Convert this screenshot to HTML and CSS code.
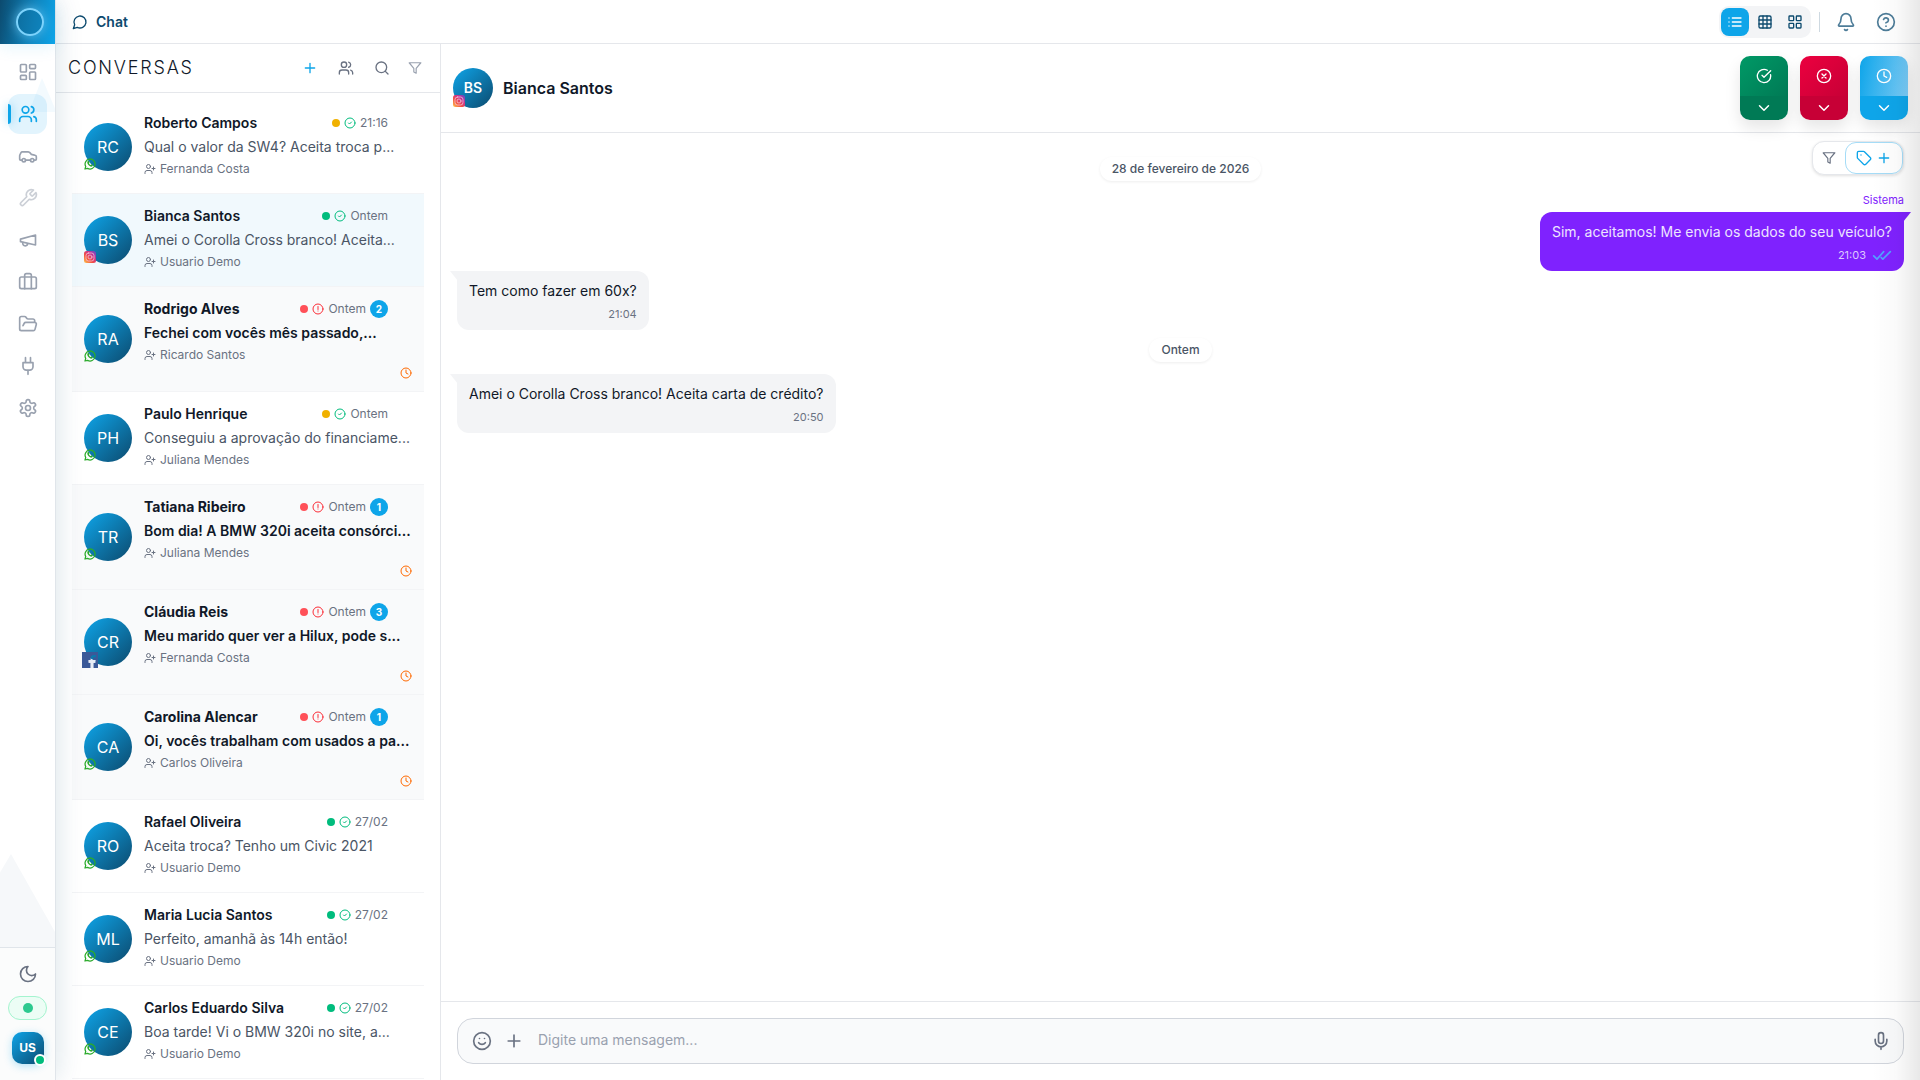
FILE: index.html
```html
<!DOCTYPE html>
<html lang="pt-BR">
<head>
<meta charset="UTF-8">
<meta name="viewport" content="width=device-width, initial-scale=1.0">
<title>Chat</title>
<link rel="stylesheet" href="styles.css">
</head>
<body>

<!-- Icon sprite -->
<svg class="sprite" aria-hidden="true">
    <defs>
        <linearGradient id="insta-fill" x1="0" y1="1" x2="1" y2="0">
            <stop offset="0" stop-color="#fdc94f"/>
            <stop offset="0.35" stop-color="#f5533f"/>
            <stop offset="0.65" stop-color="#c9338c"/>
            <stop offset="1" stop-color="#5a4fd0"/>
        </linearGradient>
    </defs>
    <symbol id="i-chat" viewBox="0 0 24 24"><path d="M7.9 20A9 9 0 1 0 4 16.1L2 22Z"/></symbol>
    <symbol id="i-dashboard" viewBox="0 0 24 24"><rect width="7" height="9" x="3" y="3" rx="1"/><rect width="7" height="5" x="14" y="3" rx="1"/><rect width="7" height="9" x="14" y="12" rx="1"/><rect width="7" height="5" x="3" y="16" rx="1"/></symbol>
    <symbol id="i-users" viewBox="0 0 24 24"><path d="M16 21v-2a4 4 0 0 0-4-4H6a4 4 0 0 0-4 4v2"/><circle cx="9" cy="7" r="4"/><path d="M22 21v-2a4 4 0 0 0-3-3.87"/><path d="M16 3.13a4 4 0 0 1 0 7.75"/></symbol>
    <symbol id="i-user-plus" viewBox="0 0 24 24"><path d="M16 21v-2a4 4 0 0 0-4-4H6a4 4 0 0 0-4 4v2"/><circle cx="9" cy="7" r="4"/><path d="M19 8v6M22 11h-6"/></symbol>
    <symbol id="i-car" viewBox="0 0 24 24"><path d="M19 17h2c.6 0 1-.4 1-1v-3c0-.9-.7-1.7-1.5-1.9C18.700 10.600 16 10 16 10s-1.300-1.400-2.200-2.300c-.5-.4-1.100-.7-1.800-.7H5c-.6 0-1.100.4-1.400.9l-1.400 2.900A3.700 3.700 0 0 0 2 12v4c0 .6.4 1 1 1h2"/><circle cx="7" cy="17" r="2"/><path d="M9 17h6"/><circle cx="17" cy="17" r="2"/></symbol>
    <symbol id="i-wrench" viewBox="0 0 24 24"><path d="M14.700 6.300a1 1 0 0 0 0 1.400l1.600 1.600a1 1 0 0 0 1.400 0l3.770-3.770a6 6 0 0 1-7.940 7.940l-6.910 6.910a2.120 2.120 0 0 1-3-3l6.910-6.910a6 6 0 0 1 7.940-7.940l-3.760 3.760z"/></symbol>
    <symbol id="i-megaphone" viewBox="0 0 24 24"><path d="m3 11 18-5v12L3 14v-3z"/><path d="M11.600 16.800a3 3 0 1 1-5.800-1.600"/></symbol>
    <symbol id="i-briefcase" viewBox="0 0 24 24"><path d="M16 20V4a2 2 0 0 0-2-2h-4a2 2 0 0 0-2 2v16"/><rect width="20" height="14" x="2" y="6" rx="2"/></symbol>
    <symbol id="i-folder" viewBox="0 0 24 24"><path d="m6 14 1.500-2.900A2 2 0 0 1 9.240 10H20a2 2 0 0 1 1.940 2.500l-1.540 6a2 2 0 0 1-1.950 1.500H4a2 2 0 0 1-2-2V5a2 2 0 0 1 2-2h3.900a2 2 0 0 1 1.690.9l.81 1.200a2 2 0 0 0 1.670.9H18a2 2 0 0 1 2 2v2"/></symbol>
    <symbol id="i-plug" viewBox="0 0 24 24"><path d="M12 22v-5M9 8V2M15 8V2M18 8v5a4 4 0 0 1-4 4h-4a4 4 0 0 1-4-4V8Z"/></symbol>
    <symbol id="i-settings" viewBox="0 0 24 24"><path d="M12.220 2h-.44a2 2 0 0 0-2 2v.18a2 2 0 0 1-1 1.730l-.43.25a2 2 0 0 1-2 0l-.15-.08a2 2 0 0 0-2.730.73l-.22.38a2 2 0 0 0 .73 2.730l.15.1a2 2 0 0 1 1 1.720v.51a2 2 0 0 1-1 1.740l-.15.09a2 2 0 0 0-.73 2.730l.22.38a2 2 0 0 0 2.730.73l.15-.08a2 2 0 0 1 2 0l.43.25a2 2 0 0 1 1 1.730V20a2 2 0 0 0 2 2h.44a2 2 0 0 0 2-2v-.18a2 2 0 0 1 1-1.730l.43-.25a2 2 0 0 1 2 0l.15.08a2 2 0 0 0 2.730-.73l.22-.39a2 2 0 0 0-.73-2.730l-.15-.08a2 2 0 0 1-1-1.740v-.5a2 2 0 0 1 1-1.740l.15-.09a2 2 0 0 0 .73-2.730l-.22-.38a2 2 0 0 0-2.730-.73l-.15.08a2 2 0 0 1-2 0l-.43-.25a2 2 0 0 1-1-1.730V4a2 2 0 0 0-2-2z"/><circle cx="12" cy="12" r="3"/></symbol>
    <symbol id="i-moon" viewBox="0 0 24 24"><path d="M12 3a6 6 0 0 0 9 9 9 9 0 1 1-9-9Z"/></symbol>
    <symbol id="i-plus" viewBox="0 0 24 24"><path d="M5 12h14M12 5v14"/></symbol>
    <symbol id="i-search" viewBox="0 0 24 24"><circle cx="11" cy="11" r="8"/><path d="m21 21-4.300-4.300"/></symbol>
    <symbol id="i-filter" viewBox="0 0 24 24"><path d="M22 3H2l8 9.460V19l4 2v-8.540L22 3z"/></symbol>
    <symbol id="i-list" viewBox="0 0 24 24"><path d="M8 6h13M8 12h13M8 18h13M3 6h.01M3 12h.01M3 18h.01"/></symbol>
    <symbol id="i-grid" viewBox="0 0 24 24"><rect width="18" height="18" x="3" y="3" rx="2"/><path d="M3 9h18M3 15h18M9 3v18M15 3v18"/></symbol>
    <symbol id="i-cards" viewBox="0 0 24 24"><rect width="7" height="7" x="3" y="3" rx="1"/><rect width="7" height="7" x="14" y="3" rx="1"/><rect width="7" height="7" x="14" y="14" rx="1"/><rect width="7" height="7" x="3" y="14" rx="1"/></symbol>
    <symbol id="i-bell" viewBox="0 0 24 24"><path d="M10.270 21a2 2 0 0 0 3.460 0"/><path d="M3.260 15.330A1 1 0 0 0 4 17h16a1 1 0 0 0 .74-1.670C19.410 13.960 18 12.500 18 8A6 6 0 0 0 6 8c0 4.500-1.410 5.960-2.740 7.330"/></symbol>
    <symbol id="i-help" viewBox="0 0 24 24"><circle cx="12" cy="12" r="10"/><path d="M9.090 9a3 3 0 0 1 5.830 1c0 2-3 3-3 3M12 17h.01"/></symbol>
    <symbol id="i-check-circle" viewBox="0 0 24 24"><circle cx="12" cy="12" r="10"/><path d="m9 12 2 2 4-4"/></symbol>
    <symbol id="i-check-big" viewBox="0 0 24 24"><path d="M21.800 10A10 10 0 1 1 17 3.340"/><path d="m9 11 3 3L22 4"/></symbol>
    <symbol id="i-alert" viewBox="0 0 24 24"><circle cx="12" cy="12" r="10"/><path d="M12 7v6M12 16h.01"/></symbol>
    <symbol id="i-x-circle" viewBox="0 0 24 24"><circle cx="12" cy="12" r="10"/><path d="m15 9-6 6M9 9l6 6"/></symbol>
    <symbol id="i-clock" viewBox="0 0 24 24"><circle cx="12" cy="12" r="10"/><path d="M12 6v6l4 2"/></symbol>
    <symbol id="i-chevron" viewBox="0 0 24 24"><path d="m6 9 6 6 6-6"/></symbol>
    <symbol id="i-tag" viewBox="0 0 24 24"><path d="M12.590 2.590A2 2 0 0 0 11.170 2H4a2 2 0 0 0-2 2v7.170a2 2 0 0 0 .59 1.420l8.700 8.700a2.430 2.430 0 0 0 3.420 0l6.580-6.580a2.430 2.430 0 0 0 0-3.420z"/><path d="M7.500 7.500h.01"/></symbol>
    <symbol id="i-read" viewBox="0 0 24 16"><path d="m2 9 4 4 8-9M11 11l2 2 9-9"/></symbol>
    <symbol id="i-smile" viewBox="0 0 24 24"><circle cx="12" cy="12" r="10"/><path d="M8 14s1.500 2 4 2 4-2 4-2M9 9h.01M15 9h.01"/></symbol>
    <symbol id="i-mic" viewBox="0 0 24 24"><rect x="9" y="2" width="6" height="13" rx="3"/><path d="M19 10v2a7 7 0 0 1-14 0v-2M12 19v3"/></symbol>
    <symbol id="i-whatsapp" viewBox="0 0 24 24"><path fill="none" stroke="#2cab2c" stroke-width="2.500" d="m2 22 1.500-5A10 10 0 1 1 7.200 20.700Z"/><path fill="#2cab2c" stroke="none" d="M8 6c-2 1-2 4 0 7s6 5 8 4c2-1 2-3 1-3.500l-2-1-1.500 1.500c-2-.7-3-2-3.500-3.500L11 9 10 6.500C9.700 6 9 5.700 8 6Z"/></symbol>
    <symbol id="i-instagram" viewBox="0 0 24 24"><rect width="24" height="24" rx="5" fill="url(#insta-fill)" stroke="none"/><rect x="4" y="4" width="16" height="16" rx="5" stroke="#f6c5dc" stroke-width="1.500" fill="none"/><circle cx="12" cy="12" r="4" stroke="#f6c5dc" stroke-width="1.500" fill="none"/></symbol>
    <symbol id="i-facebook" viewBox="0 0 24 24"><path fill="#3b5998" stroke="none" d="M0 0h24v24h-7v-8h3l.5-4H17v-2c0-1.200.5-2 2-2h2V4.500h-3c-3.500 0-5 2-5 5V12h-3v4h3v8H0Z"/><path fill="#e8edf6" stroke="none" d="M13 24v-8h-3v-4h3l1-2 3 2h3.500L20 16h-3v8Z"/></symbol>
</svg>

<div class="app">
    <aside class="sidebar">
        <div class="logo">
            <span class="logo-ring"></span>
        </div>
        <nav class="nav">
            <a class="nav-link" href="#" aria-label="Painel"><svg class="icon icon-20"><use href="#i-dashboard"/></svg></a>
            <a class="nav-link active" href="#" aria-label="Contatos"><svg class="icon icon-20"><use href="#i-users"/></svg></a>
            <a class="nav-link" href="#" aria-label="Carros"><svg class="icon icon-20"><use href="#i-car"/></svg></a>
            <a class="nav-link disabled" href="#" aria-label="Oficina"><svg class="icon icon-20"><use href="#i-wrench"/></svg></a>
            <a class="nav-link" href="#" aria-label="Campanhas"><svg class="icon icon-20"><use href="#i-megaphone"/></svg></a>
            <a class="nav-link" href="#" aria-label="Neg&oacute;cios"><svg class="icon icon-20"><use href="#i-briefcase"/></svg></a>
            <a class="nav-link" href="#" aria-label="Arquivos"><svg class="icon icon-20"><use href="#i-folder"/></svg></a>
            <a class="nav-link" href="#" aria-label="Integra&ccedil;&otilde;es"><svg class="icon icon-20"><use href="#i-plug"/></svg></a>
            <a class="nav-link" href="#" aria-label="Configura&ccedil;&otilde;es"><svg class="icon icon-20"><use href="#i-settings"/></svg></a>
        </nav>
        <div class="sidebar-shape"></div>
        <div class="sidebar-footer">
            <button class="theme-btn" aria-label="Tema"><svg class="icon icon-20"><use href="#i-moon"/></svg></button>
            <button class="status-btn" aria-label="Status"><span class="status-dot"></span></button>
            <button class="user-btn">US<span class="user-dot"></span></button>
        </div>
    </aside>

    <div class="main">
        <header class="topbar">
            <h1 class="page-title"><svg class="icon icon-16"><use href="#i-chat"/></svg>Chat</h1>
            <div class="views">
                <button class="view-btn active" aria-label="Lista"><svg class="icon icon-16"><use href="#i-list"/></svg></button>
                <button class="view-btn" aria-label="Tabela"><svg class="icon icon-16"><use href="#i-grid"/></svg></button>
                <button class="view-btn" aria-label="Cart&otilde;es"><svg class="icon icon-16"><use href="#i-cards"/></svg></button>
            </div>
            <span class="divider"></span>
            <button class="top-btn" aria-label="Notifica&ccedil;&otilde;es"><svg class="icon icon-20"><use href="#i-bell"/></svg></button>
            <button class="top-btn" aria-label="Ajuda"><svg class="icon icon-20"><use href="#i-help"/></svg></button>
        </header>

        <div class="content">
            <section class="conversations">
                <header class="conv-header">
                    <h2 class="conv-title">CONVERSAS</h2>
                    <button class="conv-btn primary" aria-label="Nova conversa"><svg class="icon icon-16"><use href="#i-plus"/></svg></button>
                    <button class="conv-btn" aria-label="Equipe"><svg class="icon icon-16"><use href="#i-users"/></svg></button>
                    <button class="conv-btn" aria-label="Buscar"><svg class="icon icon-16"><use href="#i-search"/></svg></button>
                    <button class="conv-btn small" aria-label="Filtrar"><svg class="icon icon-14"><use href="#i-filter"/></svg></button>
                </header>
                <ul class="conv-list" id="conv-list"></ul>
            </section>

            <section class="chat">
                <header class="chat-header">
                    <div class="contact">
                        <div class="avatar avatar-sm">BS<svg class="icon channel"><use href="#i-instagram"/></svg></div>
                        <h2 class="chat-name">Bianca Santos</h2>
                    </div>
                    <div class="action green">
                        <button class="action-main" aria-label="Concluir"><svg class="icon icon-16"><use href="#i-check-big"/></svg></button>
                        <button class="action-more" aria-label="Mais op&ccedil;&otilde;es"><svg class="icon icon-18"><use href="#i-chevron"/></svg></button>
                    </div>
                    <div class="action red">
                        <button class="action-main" aria-label="Cancelar"><svg class="icon icon-16"><use href="#i-x-circle"/></svg></button>
                        <button class="action-more" aria-label="Mais op&ccedil;&otilde;es"><svg class="icon icon-18"><use href="#i-chevron"/></svg></button>
                    </div>
                    <div class="action blue">
                        <button class="action-main" aria-label="Adiar"><svg class="icon icon-16"><use href="#i-clock"/></svg></button>
                        <button class="action-more" aria-label="Mais op&ccedil;&otilde;es"><svg class="icon icon-18"><use href="#i-chevron"/></svg></button>
                    </div>
                </header>

                <div class="messages">
                    <div class="tools">
                        <button class="tool-filter" aria-label="Filtrar"><svg class="icon icon-14"><use href="#i-filter"/></svg></button>
                        <button class="tool-tag" aria-label="Adicionar etiqueta"><svg class="icon icon-16"><use href="#i-tag"/></svg><svg class="icon icon-16"><use href="#i-plus"/></svg></button>
                    </div>
                    <div class="day">28 de fevereiro de 2026</div>
                    <div class="sender">Sistema</div>
                    <div class="bubble sent">
                        <p class="bubble-text">Sim, aceitamos! Me envia os dados do seu veículo?</p>
                        <div class="bubble-time">21:03<svg class="icon read"><use href="#i-read"/></svg></div>
                    </div>
                    <div class="bubble">
                        <p class="bubble-text">Tem como fazer em 60x?</p>
                        <div class="bubble-time">21:04</div>
                    </div>
                    <div class="day">Ontem</div>
                    <div class="bubble">
                        <p class="bubble-text">Amei o Corolla Cross branco! Aceita carta de crédito?</p>
                        <div class="bubble-time">20:50</div>
                    </div>
                </div>

                <footer class="composer">
                    <div class="composer-box">
                        <button class="composer-btn" aria-label="Emoji"><svg class="icon icon-20"><use href="#i-smile"/></svg></button>
                        <button class="composer-btn" aria-label="Anexar"><svg class="icon icon-20"><use href="#i-plus"/></svg></button>
                        <input class="composer-input" type="text" placeholder="Digite uma mensagem..." aria-label="Mensagem">
                        <button class="composer-btn" aria-label="Gravar"><svg class="icon icon-20"><use href="#i-mic"/></svg></button>
                    </div>
                </footer>
            </section>
        </div>
    </div>
    <div class="edge-shadow"></div>
</div>

<script src="script.js"></script>
</body>
</html>
```

FILE: styles.css
```css
* {
    box-sizing: border-box;
    margin: 0;
    padding: 0;
}

body {
    font-family: Inter, "Liberation Sans", sans-serif;
    font-size: 14px;
    line-height: 20px;
    color: #101828;
    background: #fff;
}

button {
    display: flex;
    align-items: center;
    justify-content: center;
    border: none;
    background: none;
    font: inherit;
    color: inherit;
    cursor: pointer;
}

ul {
    list-style: none;
}

.sprite {
    position: absolute;
    width: 0;
    height: 0;
}

.icon {
    display: block;
    flex: none;
    width: 12px;
    height: 12px;
    fill: none;
    stroke: currentColor;
    stroke-width: 2;
    stroke-linecap: round;
    stroke-linejoin: round;
}

.icon-14 {
    width: 14px;
    height: 14px;
}

.icon-16 {
    width: 16px;
    height: 16px;
}

.icon-18 {
    width: 18px;
    height: 18px;
}

.icon-20 {
    width: 20px;
    height: 20px;
}

.app {
    display: flex;
    height: 100vh;
    overflow: hidden;
    position: relative;
}

/* Sidebar */
.sidebar {
    display: flex;
    flex-direction: column;
    flex: none;
    width: 56px;
    border-right: 1px solid #e0e5ea;
    background: #fff;
    box-shadow: 4px 0 24px rgba(12, 74, 110, 0.12);
    position: relative;
    z-index: 2;
}

.logo {
    display: flex;
    align-items: center;
    justify-content: center;
    height: 44px;
    padding-left: 5px;
    background: linear-gradient(100deg, #0c4a6e, #0e86c0 60%, #0ea5e9);
    box-shadow: 0 4px 16px rgba(14, 165, 233, 0.1);
}

.logo-ring {
    width: 28px;
    height: 28px;
    border: 2px solid #7dd3fc;
    border-radius: 50%;
    background: rgba(14, 116, 168, 0.5);
    box-shadow: 0 0 12px rgba(125, 211, 252, 0.7);
}

.nav {
    display: flex;
    flex-direction: column;
    gap: 2px;
    padding: 8px;
}

.nav-link {
    display: flex;
    align-items: center;
    justify-content: center;
    height: 40px;
    border-radius: 12px;
    color: #99a1af;
    position: relative;
}

.nav-link.active {
    color: #0ea5e9;
    background: #e2f4fd;
}

.nav-link.active::before {
    content: "";
    position: absolute;
    left: 0;
    top: 10px;
    width: 3px;
    height: 20px;
    border-radius: 0 3px 3px 0;
    background: #0ea5e9;
    box-shadow: 0 0 10px rgba(14, 165, 233, 0.6);
}

.nav-link.active::after {
    content: "";
    position: absolute;
    right: -8px;
    top: -16px;
    width: 26px;
    height: 34px;
    background: rgba(14, 165, 233, 0.05);
    clip-path: polygon(50% 0, 100% 90%, 100% 100%, 0 100%);
}

.nav-link.disabled {
    opacity: 0.5;
}

.sidebar-shape {
    height: 93px;
    margin-top: auto;
    background: #f6f8fa;
    clip-path: polygon(0 20%, 20% 0, 100% 84%, 100% 100%, 0 100%);
}

.sidebar-footer {
    display: flex;
    flex-direction: column;
    align-items: center;
    padding: 8px 8px 16px;
    border-top: 1px solid #e0e5ea;
    background: #fbfcfc;
}

.theme-btn {
    width: 100%;
    height: 36px;
    color: #6a7282;
}

.status-btn {
    width: 100%;
    height: 24px;
    margin: 4px 0 12px;
    border: 1px solid #a4f4cf;
    border-radius: 12px;
    background: #ecfdf5;
}

.status-dot {
    width: 10px;
    height: 10px;
    border-radius: 50%;
    background: #2dc98f;
}

.user-btn {
    width: 32px;
    height: 32px;
    border-radius: 10px;
    background: linear-gradient(135deg, #0ea5e9, #0c4a6e);
    box-shadow: 0 2px 8px rgba(14, 165, 233, 0.3);
    color: #fff;
    font-size: 12px;
    font-weight: 700;
    position: relative;
}

.user-dot {
    position: absolute;
    right: -2px;
    bottom: -2px;
    width: 12px;
    height: 12px;
    border: 2px solid #fff;
    border-radius: 50%;
    background: #00bc7d;
}

/* Top bar */
.main {
    display: flex;
    flex-direction: column;
    flex: 1;
    min-width: 0;
}

.topbar {
    display: flex;
    align-items: center;
    flex: none;
    height: 44px;
    padding: 0 16px;
    border-bottom: 1px solid #e5e7eb;
    color: #0c4a6e;
}

.page-title {
    display: flex;
    align-items: center;
    gap: 8px;
    margin-right: auto;
    font-size: 14px;
    font-weight: 600;
}

.views {
    display: flex;
    gap: 2px;
    padding: 2px;
    border-radius: 10px;
    background: #f3f4f6;
}

.view-btn {
    width: 28px;
    height: 28px;
    border-radius: 8px;
}

.view-btn.active {
    background: #0ea5e9;
    color: #fff;
}

.divider {
    width: 1px;
    height: 20px;
    margin: 0 8px;
    background: #ced9e1;
}

.top-btn {
    width: 36px;
    height: 36px;
    margin-left: 4px;
    color: #4d7c98;
}

.divider + .top-btn {
    margin-left: 0;
}

/* Conversations */
.content {
    display: flex;
    flex: 1;
    min-height: 0;
}

.conversations {
    display: flex;
    flex-direction: column;
    flex: none;
    width: 384px;
}

.conv-header {
    display: flex;
    align-items: center;
    flex: none;
    gap: 8px;
    height: 49px;
    padding: 0 14px 0 12px;
    border-bottom: 1px solid #e5e7eb;
}

.conv-title {
    margin-right: auto;
    font-size: 18px;
    font-weight: 300;
    letter-spacing: 0.1em;
}

.conv-btn {
    width: 28px;
    height: 28px;
    color: #6a7282;
}

.conv-btn.primary {
    color: #0ea5e9;
}

.conv-btn.small {
    width: 22px;
    color: #99a1af;
}

.conv-list {
    flex: 1;
    padding: 8px 16px;
    overflow: hidden;
}

.conv-item {
    display: flex;
    align-items: center;
    gap: 12px;
    padding: 12px;
    border-bottom: 1px solid #f3f4f6;
}

.conv-item.selected {
    background: #f1f9fd;
}

.conv-item.unread {
    background: #f9fafb;
}

.avatar {
    display: flex;
    align-items: center;
    justify-content: center;
    flex: none;
    width: 48px;
    height: 48px;
    border-radius: 50%;
    background: linear-gradient(135deg, #0ea5e9, #0c4a6e);
    color: #fff;
    font-size: 16px;
    position: relative;
}

.avatar-sm {
    width: 40px;
    height: 40px;
    font-size: 14px;
    font-weight: 600;
}

.channel {
    position: absolute;
    left: 0;
    bottom: 1px;
}

.channel.facebook {
    left: -2px;
    bottom: -2px;
    width: 16px;
    height: 16px;
}

.conv-body {
    display: flex;
    flex-direction: column;
    flex: 1;
    gap: 4px;
    min-width: 0;
    padding-bottom: 4px;
}

.conv-item.unread .conv-body {
    padding-bottom: 0;
}

.conv-top {
    display: flex;
    align-items: center;
    gap: 4px;
    padding-right: 24px;
}

.conv-name {
    flex: 1;
    font-weight: 600;
}

.unread .conv-name {
    font-weight: 700;
}

.dot {
    width: 8px;
    height: 8px;
    border-radius: 50%;
    background: currentColor;
}

.dot.green,
.state.ok {
    color: #00bc7d;
}

.dot.yellow {
    color: #f0b100;
}

.dot.red {
    color: #ff5058;
}

.state.late {
    color: #fb2c36;
}

.conv-time {
    font-size: 12px;
    color: #6a7282;
}

.count {
    width: 18px;
    height: 18px;
    border-radius: 50%;
    background: #0ea5e9;
    color: #fff;
    font-size: 10px;
    font-weight: 700;
    line-height: 18px;
    text-align: center;
}

.conv-text {
    white-space: nowrap;
    overflow: hidden;
    color: #4a5565;
}

.unread .conv-text {
    font-weight: 600;
    color: #101828;
}

.conv-agent {
    display: flex;
    align-items: center;
    gap: 4px;
    font-size: 12px;
    line-height: 16px;
    color: #6a7282;
}

.conv-clock {
    align-self: flex-end;
    color: #ff6900;
}

/* Chat */
.chat {
    display: flex;
    flex-direction: column;
    flex: 1;
    min-width: 0;
    border-left: 1px solid #e5e7eb;
}

.chat-header {
    display: flex;
    align-items: center;
    flex: none;
    gap: 12px;
    padding: 12px;
    border-bottom: 1px solid #e5e7eb;
}

.contact {
    display: flex;
    align-items: center;
    flex: 1;
    gap: 10px;
}

.chat-name {
    font-size: 16px;
    font-weight: 600;
}

.action {
    width: 48px;
    border-radius: 10px;
    overflow: hidden;
    color: #fff;
    box-shadow: 0 8px 16px rgba(0, 0, 0, 0.1);
}

.action-main {
    width: 100%;
    height: 40px;
}

.action-more {
    width: 100%;
    height: 24px;
}

.green .action-main {
    background: linear-gradient(135deg, #009966, #007a55);
}

.green .action-more {
    background: #007a55;
}

.red .action-main {
    background: linear-gradient(135deg, #ec003f, #c70036);
}

.red .action-more {
    background: #c70036;
}

.blue .action-main {
    background: linear-gradient(100deg, #0ea5e9, #7dcdf8);
}

.blue .action-more {
    background: #0ea5e9;
}

.messages {
    display: flex;
    flex-direction: column;
    align-items: flex-start;
    flex: 1;
    padding: 24px 16px;
    position: relative;
}

.tools {
    display: flex;
    position: absolute;
    top: 8px;
    right: 16px;
    border: 1px solid #e5e7eb;
    border-radius: 12px;
    background: #fff;
    box-shadow: 0 1px 3px rgba(0, 0, 0, 0.12);
}

.tool-filter {
    width: 32px;
    height: 32px;
    color: #6a7282;
}

.tool-tag {
    gap: 4px;
    width: 58px;
    height: 32px;
    border: 1px solid #a5dcf7;
    border-radius: 11px;
    color: #0ea5e9;
}

.day {
    align-self: center;
    padding: 4px 12px;
    border-radius: 12px;
    box-shadow: 0 1px 3px rgba(0, 0, 0, 0.07);
    font-size: 12px;
    font-weight: 500;
    line-height: 16px;
    color: #4a5565;
}

.bubble + .day {
    margin: 8px 0 12px;
}

.sender {
    align-self: flex-end;
    margin-top: 12px;
    font-size: 11px;
    line-height: 15px;
    color: #7f22fe;
}

.bubble {
    padding: 8px 12px;
    border-radius: 0 12px 12px 12px;
    background: #f3f4f6;
    position: relative;
}

.bubble::before {
    content: "";
    position: absolute;
    left: -7px;
    top: 0;
    width: 8px;
    height: 10px;
    background: inherit;
    clip-path: polygon(0 0, 100% 0, 100% 100%);
}

.bubble.sent {
    align-self: flex-end;
    margin-top: 4px;
    border-radius: 12px 0 12px 12px;
    background: #7f22fe;
    color: #ede4ff;
}

.bubble.sent::before {
    left: auto;
    right: -7px;
    clip-path: polygon(0 0, 100% 0, 0 100%);
}

.bubble-text {
    line-height: 23px;
}

.bubble-time {
    display: flex;
    align-items: center;
    justify-content: flex-end;
    gap: 6px;
    margin-top: 4px;
    font-size: 11px;
    line-height: 16px;
    color: #6a7282;
}

.sent .bubble-time {
    color: #dcc8ff;
}

.read {
    width: 20px;
    height: 14px;
    color: #51a2ff;
}

.composer {
    flex: none;
    padding: 16px;
    border-top: 1px solid #e5e7eb;
}

.composer-box {
    display: flex;
    align-items: center;
    height: 46px;
    padding: 0 6px 0 8px;
    border: 1px solid #d1d5dc;
    border-radius: 16px;
    background: #f9fafb;
}

.composer-btn {
    width: 32px;
    height: 32px;
    color: #6a7282;
}

.composer-input {
    flex: 1;
    min-width: 0;
    height: 44px;
    padding: 0 8px 4px;
    border: none;
    outline: none;
    background: none;
    font: inherit;
}

.composer-input::placeholder {
    color: #99a1af;
}

.edge-shadow {
    position: absolute;
    top: 0;
    right: 0;
    bottom: 0;
    width: 48px;
    background: linear-gradient(to right, rgba(0, 0, 0, 0), rgba(0, 0, 0, 0.02) 50%, rgba(0, 0, 0, 0.09));
    pointer-events: none;
    z-index: 3;
}
```

FILE: script.js
```js
const conversations = [
    { initials: 'RC', name: 'Roberto Campos', dot: 'yellow', time: '21:16', text: 'Qual o valor da SW4? Aceita troca p...', agent: 'Fernanda Costa', channel: 'whatsapp' },
    { initials: 'BS', name: 'Bianca Santos', dot: 'green', time: 'Ontem', text: 'Amei o Corolla Cross branco! Aceita...', agent: 'Usuario Demo', channel: 'instagram', selected: true },
    { initials: 'RA', name: 'Rodrigo Alves', dot: 'red', time: 'Ontem', text: 'Fechei com vocês mês passado,...', agent: 'Ricardo Santos', channel: 'whatsapp', unread: 2 },
    { initials: 'PH', name: 'Paulo Henrique', dot: 'yellow', time: 'Ontem', text: 'Conseguiu a aprovação do financiame...', agent: 'Juliana Mendes', channel: 'whatsapp' },
    { initials: 'TR', name: 'Tatiana Ribeiro', dot: 'red', time: 'Ontem', text: 'Bom dia! A BMW 320i aceita consórci...', agent: 'Juliana Mendes', channel: 'whatsapp', unread: 1 },
    { initials: 'CR', name: 'Cláudia Reis', dot: 'red', time: 'Ontem', text: 'Meu marido quer ver a Hilux, pode s...', agent: 'Fernanda Costa', channel: 'facebook', unread: 3 },
    { initials: 'CA', name: 'Carolina Alencar', dot: 'red', time: 'Ontem', text: 'Oi, vocês trabalham com usados a pa...', agent: 'Carlos Oliveira', channel: 'whatsapp', unread: 1 },
    { initials: 'RO', name: 'Rafael Oliveira', dot: 'green', time: '27/02', text: 'Aceita troca? Tenho um Civic 2021', agent: 'Usuario Demo', channel: 'whatsapp' },
    { initials: 'ML', name: 'Maria Lucia Santos', dot: 'green', time: '27/02', text: 'Perfeito, amanhã às 14h então!', agent: 'Usuario Demo', channel: 'whatsapp' },
    { initials: 'CE', name: 'Carlos Eduardo Silva', dot: 'green', time: '27/02', text: 'Boa tarde! Vi o BMW 320i no site, a...', agent: 'Usuario Demo', channel: 'whatsapp' }
];

function icon(name, cls = '') {
    return `<svg class="icon ${cls}"><use href="#i-${name}"/></svg>`;
}

function renderItem(c) {
    return `
        <li class="conv-item ${c.selected ? 'selected' : ''} ${c.unread ? 'unread' : ''}">
            <div class="avatar">${c.initials}${icon(c.channel, 'channel ' + c.channel)}</div>
            <div class="conv-body">
                <div class="conv-top">
                    <span class="conv-name">${c.name}</span>
                    <span class="dot ${c.dot}"></span>
                    ${c.unread ? icon('alert', 'state late') : icon('check-circle', 'state ok')}
                    <span class="conv-time">${c.time}</span>
                    ${c.unread ? `<span class="count">${c.unread}</span>` : ''}
                </div>
                <p class="conv-text">${c.text}</p>
                <div class="conv-agent">${icon('user-plus')}${c.agent}</div>
                ${c.unread ? icon('clock', 'conv-clock') : ''}
            </div>
        </li>`;
}

document.getElementById('conv-list').innerHTML = conversations.map(renderItem).join('');
```
